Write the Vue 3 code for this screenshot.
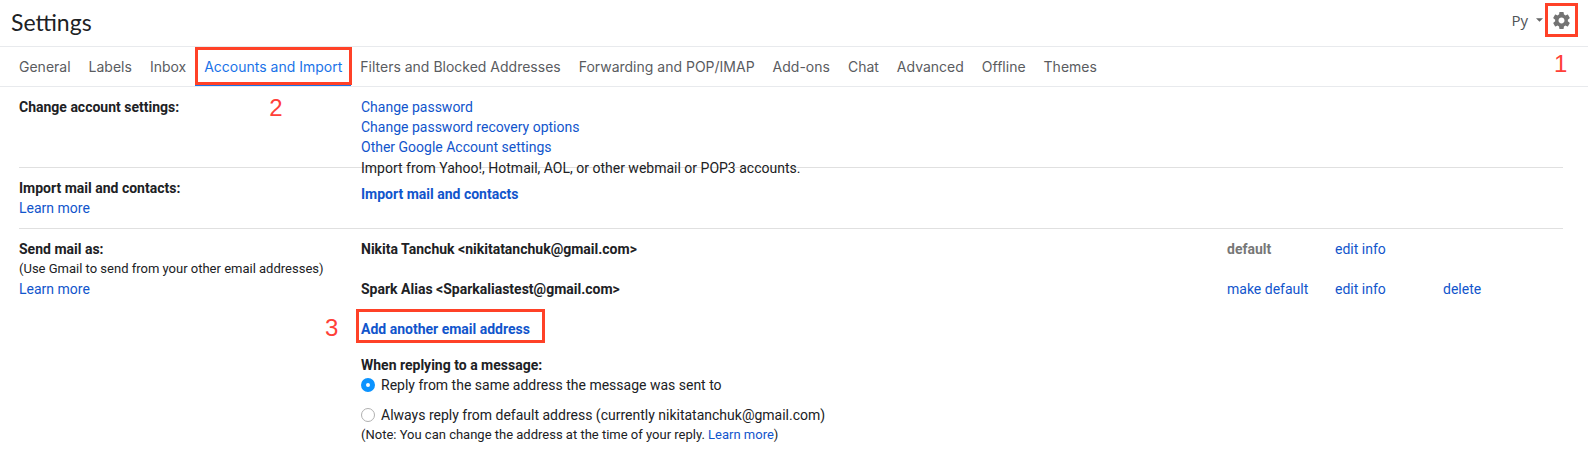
<script setup>
import { ref } from 'vue'

const tabs = [
  'General',
  'Labels',
  'Inbox',
  'Accounts and Import',
  'Filters and Blocked Addresses',
  'Forwarding and POP/IMAP',
  'Add-ons',
  'Chat',
  'Advanced',
  'Offline',
  'Themes',
]
const activeTab = ref('Accounts and Import')

const accounts = [
  { name: 'Nikita Tanchuk <nikitatanchuk@gmail.com>', isDefault: true },
  { name: 'Spark Alias <Sparkaliastest@gmail.com>', isDefault: false },
]
const replyFrom = ref('same')
</script>

<template>
  <div class="page">
    <header class="header">
      <h1 class="title">Settings</h1>
      <div class="tools">
        <button class="input-tool" type="button">
          Py
          <svg class="caret" viewBox="0 0 8 4" aria-hidden="true"><path d="M0 0h8L4 4z" /></svg>
        </button>
        <div class="gear-wrap">
          <button class="gear" type="button" aria-label="Settings menu">
            <svg viewBox="2 2 20 20" aria-hidden="true">
              <path
                d="M19.43 12.98c.04-.32.07-.64.07-.98s-.03-.66-.07-.98l2.11-1.65c.19-.15.24-.42.12-.64l-2-3.46c-.12-.22-.39-.3-.61-.22l-2.49 1c-.52-.4-1.08-.73-1.69-.98l-.38-2.65A.488.488 0 0 0 14 2h-4c-.25 0-.46.18-.49.42l-.38 2.65c-.61.25-1.17.59-1.69.98l-2.49-1c-.23-.09-.49 0-.61.22l-2 3.46c-.13.22-.07.49.12.64l2.11 1.65c-.04.32-.07.65-.07.98s.03.66.07.98l-2.11 1.65c-.19.15-.24.42-.12.64l2 3.46c.12.22.39.3.61.22l2.49-1c.52.4 1.08.73 1.69.98l.38 2.65c.03.24.24.42.49.42h4c.25 0 .46-.18.49-.42l.38-2.65c.61-.25 1.17-.59 1.69-.98l2.49 1c.23.09.49 0 .61-.22l2-3.46c.12-.22.07-.49-.12-.64l-2.11-1.65zM12 15.5c-1.93 0-3.5-1.57-3.5-3.5s1.57-3.5 3.5-3.5 3.5 1.57 3.5 3.5-1.57 3.5-3.5 3.5z"
              />
            </svg>
          </button>
          <span class="step step-one">1</span>
        </div>
      </div>
    </header>

    <nav class="tabs">
      <a
        v-for="tab in tabs"
        :key="tab"
        href="#"
        class="tab"
        :class="{ active: tab === activeTab }"
        @click.prevent="activeTab = tab"
      >{{ tab }}<template v-if="tab === 'Accounts and Import'"><span class="mark mark-tab"></span><span class="step step-two">2</span></template></a>
    </nav>

    <main class="content">
      <section class="row">
        <div class="label"><h2>Change account settings:</h2></div>
        <div class="value">
          <div><a href="#">Change password</a></div>
          <div><a href="#">Change password recovery options</a></div>
          <div><a href="#">Other Google Account settings</a></div>
        </div>
      </section>

      <section class="row">
        <div class="label">
          <h2>Import mail and contacts:</h2>
          <a href="#">Learn more</a>
        </div>
        <div class="value import">
          <div>Import from Yahoo!, Hotmail, AOL, or other webmail or POP3 accounts.</div>
          <a class="strong" href="#">Import mail and contacts</a>
        </div>
      </section>

      <section class="row">
        <div class="label">
          <h2>Send mail as:</h2>
          <div class="small">(Use Gmail to send from your other email addresses)</div>
          <a href="#">Learn more</a>
        </div>
        <div class="value">
          <table class="accounts">
            <tbody>
              <tr v-for="account in accounts" :key="account.name">
                <th scope="row">{{ account.name }}</th>
                <td>
                  <span v-if="account.isDefault" class="default">default</span>
                  <a v-else href="#">make default</a>
                </td>
                <td><a href="#">edit info</a></td>
                <td class="last"><a v-if="!account.isDefault" href="#">delete</a></td>
              </tr>
            </tbody>
          </table>
          <div class="add">
            <a class="strong" href="#">Add another email address</a>
            <span class="mark mark-add"></span>
            <span class="step step-three">3</span>
          </div>
          <fieldset class="reply">
            <legend>When replying to a message:</legend>
            <label class="choice">
              <input v-model="replyFrom" type="radio" name="reply" value="same" />
              Reply from the same address the message was sent to
            </label>
            <label class="choice">
              <input v-model="replyFrom" type="radio" name="reply" value="default" />
              Always reply from default address (currently nikitatanchuk@gmail.com)
            </label>
          </fieldset>
          <div class="small">(Note: You can change the address at the time of your reply. <a href="#">Learn more</a>)</div>
        </div>
      </section>
    </main>
  </div>
</template>

<style>
body {
  margin: 0;
  background: #fff;
}
</style>

<style scoped>
.page {
  font: 14px/20px Roboto, 'Liberation Sans', sans-serif;
  color: #202124;
  overflow: hidden;
}
a {
  color: #15c;
  text-decoration: none;
}
button {
  border: 0;
  padding: 0;
  background: none;
  font: inherit;
  cursor: pointer;
}
.header {
  display: flex;
  justify-content: space-between;
  box-sizing: border-box;
  height: 47px;
  padding: 3px 10px 0 11px;
  border-bottom: 1px solid #e8eaed;
}
.title {
  margin: 0;
  font: 400 23px/38px Lato, Roboto, sans-serif;
}
.tools {
  display: flex;
  align-items: flex-start;
  gap: 2px;
}
.input-tool {
  display: flex;
  align-items: center;
  gap: 8px;
  height: 34px;
  color: #505357;
  font: 15px/20px 'Open Sans', sans-serif;
}
.caret {
  width: 7px;
  height: 4px;
  fill: #666;
}
.gear-wrap {
  position: relative;
}
.gear {
  display: grid;
  place-items: center;
  box-sizing: border-box;
  width: 33px;
  height: 34px;
  border: 3px solid #ff4127;
}
.gear svg {
  width: 17px;
  height: 17px;
  fill: #737373;
}
.step {
  position: absolute;
  color: #ff4038;
  font: 24px/24px 'Liberation Sans', Arial, sans-serif;
}
.step-one {
  top: 49px;
  left: 9px;
}
.tabs {
  display: flex;
  box-sizing: border-box;
  height: 40px;
  padding: 0 10px;
  border-bottom: 1px solid #e8eaed;
  font: 14px/40px Inter, Roboto, sans-serif;
}
.tab {
  position: relative;
  padding: 0 9px;
  color: #5a5c5f;
  white-space: nowrap;
}
.tab.active {
  color: #1a73e8;
  box-shadow: inset 0 -1px #1a73e8;
}
.mark {
  position: absolute;
  border: 3px solid #ff4127;
  pointer-events: none;
}
.mark-tab {
  inset: 0 -1px 1px 0;
}
.step-two {
  top: 49px;
  left: 74px;
}
.content {
  padding: 0 25px 0 19px;
}
.row {
  display: grid;
  grid-template-columns: 342px 1fr;
  padding: 10px 0;
}
.row + .row {
  border-top: 1px solid #e0e0e0;
}
h2 {
  margin: 0;
  font-size: inherit;
  font-weight: 700;
}
.strong {
  font-weight: 700;
}
.import {
  display: flex;
  flex-direction: column;
  align-items: flex-start;
  gap: 6px;
  margin: -20px 0 0;
}
.small {
  font-size: 13px;
}
.accounts {
  width: 100%;
  table-layout: fixed;
  border-collapse: collapse;
}
.accounts th {
  text-align: left;
}
.accounts td {
  width: 108px;
}
.accounts .last {
  width: 120px;
}
.accounts th,
.accounts td {
  padding: 0 0 20px;
}
.default {
  color: #777;
  font-weight: 700;
}
.add {
  position: relative;
  width: 174px;
  margin-bottom: 16px;
}
.mark-add {
  inset: -10px -10px -4px -5px;
}
.step-three {
  top: -3px;
  left: -36px;
}
.reply {
  display: flex;
  flex-direction: column;
  gap: 10px;
  margin: 0;
  padding: 0;
  border: 0;
}
.reply legend {
  padding: 0;
  font-weight: 700;
}
.choice {
  display: flex;
  align-items: center;
  gap: 6px;
}
.choice input {
  appearance: none;
  box-sizing: border-box;
  width: 14px;
  height: 14px;
  margin: 0;
  border: 1px solid #b0b0b0;
  border-radius: 50%;
}
.choice input:checked {
  border: 5px solid #0b93ff;
}
</style>
